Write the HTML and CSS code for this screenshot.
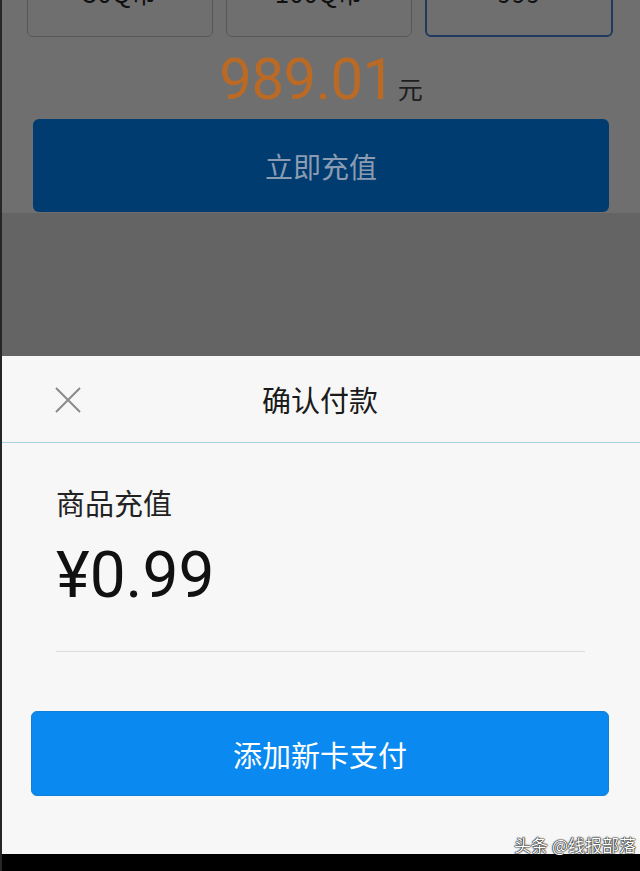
FILE: index.html
```html
<!DOCTYPE html>
<html lang="zh-CN">
<head>
  <meta charset="UTF-8" />
  <meta name="viewport" content="width=device-width, initial-scale=1.0"/>
  <title>确认付款</title>
  <link rel="stylesheet" href="styles.css">
</head>
<body>
  <div class="screen">
    <!-- page behind the dim mask -->
    <div class="behind">
      <div class="recharge">
        <div class="card_row">
          <div class="card">50Q币</div>
          <div class="card">100Q币</div>
          <div class="card selected">999</div>
        </div>
        <div class="amount">
          <span class="amount_num">989.01</span><span class="amount_unit">元</span>
        </div>
        <button class="btn_recharge">立即充值</button>
      </div>
      <div class="behind_rest"></div>
    </div>

    <!-- payment sheet -->
    <div class="sheet">
      <div class="sheet_header">
        <span class="close">
          <svg width="26" height="26" viewBox="0 0 26 26">
            <path d="M1 1 L25 25 M25 1 L1 25" stroke="#8a8a8a" stroke-width="2" fill="none"/>
          </svg>
        </span>
        <div class="sheet_title">确认付款</div>
      </div>
      <div class="sheet_body">
        <div class="goods">商品充值</div>
        <div class="price">¥0.99</div>
        <div class="divider"></div>
      </div>
      <button class="btn_pay">添加新卡支付</button>
      <div class="watermark">头条 @线报部落</div>
    </div>

    <div class="navbar"></div>
  </div>
</body>
</html>
```

FILE: styles.css
```css
body {
  margin: 0;
  background-color: #000;
  font-family: "Noto Sans CJK SC", sans-serif;
}

.screen {
  width: 638px;
  height: 871px;
  border-left: 2px solid #262626;
  display: flex;
  flex-direction: column;
  overflow: hidden;
}

.behind {
  height: 356px;
  display: flex;
  flex-direction: column;
  background-color: #646464;
}

.recharge {
  height: 213px;
  background-color: #6f6f6f;
  display: flex;
  flex-direction: column;
  overflow: hidden;
}

.card_row {
  display: flex;
  gap: 13px;
  padding: 0 27px 0 25px;
  margin-top: -41px;
}

.card {
  flex: 1;
  height: 78px;
  box-sizing: border-box;
  padding-bottom: 14px;
  border: 1px solid #585858;
  border-radius: 6px;
  display: flex;
  align-items: center;
  justify-content: center;
  font-size: 26px;
  color: #111;
}

.card.selected {
  border: 2px solid #1e3a60;
}

.amount {
  display: flex;
  justify-content: center;
  align-items: baseline;
  margin-top: 8px;
  height: 70px;
}

.amount_num {
  font-family: Roboto, sans-serif;
  font-size: 58px;
  color: #bb6a26;
  letter-spacing: -0.5px;
}

.amount_unit {
  font-size: 25px;
  color: #1e1e1e;
  margin-left: 3px;
}

.btn_recharge {
  margin: 4px 31px 0 31px;
  height: 93px;
  border: none;
  border-radius: 6px;
  background-color: #003c70;
  color: #8b9cb2;
  font-family: "Noto Sans CJK SC", sans-serif;
  font-size: 28px;
}

.behind_rest {
  flex: 1;
}

.sheet {
  position: relative;
  height: 498px;
  background-color: #f7f7f7;
  display: flex;
  flex-direction: column;
}

.sheet_header {
  height: 86px;
  border-bottom: 1px solid #a8d2df;
  display: flex;
  align-items: center;
  justify-content: center;
  position: relative;
}

.close {
  position: absolute;
  left: 53px;
  top: 31px;
  display: flex;
}

.sheet_title {
  font-size: 29px;
  color: #1a1a1a;
  margin-right: 2px;
}

.sheet_body {
  padding: 39px 55px 0 54px;
}

.goods {
  font-size: 29px;
  line-height: 40px;
  color: #222;
}

.price {
  font-family: Roboto, sans-serif;
  font-size: 64px;
  line-height: 72px;
  color: #111;
  margin-top: 18px;
}

.divider {
  margin-top: 39px;
  height: 1px;
  background-color: #dcdcdc;
}

.btn_pay {
  margin: 59px 31px 0 29px;
  height: 85px;
  border: 1px solid #0f7fd8;
  border-radius: 6px;
  background-color: #0a89f1;
  color: #fff;
  font-family: "Noto Sans CJK SC", sans-serif;
  font-size: 29px;
}

.watermark {
  position: absolute;
  right: 4px;
  bottom: -3px;
  font-size: 17px;
  color: #fff;
  text-shadow: 0 0 2px #000, 0 0 1px #000, 0 0 1px #000;
}

.navbar {
  flex: 1;
  background-color: #000;
}
```
